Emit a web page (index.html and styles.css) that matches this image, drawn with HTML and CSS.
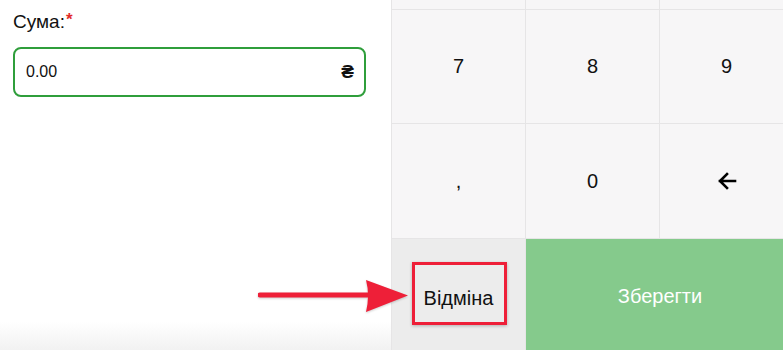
FILE: index.html
```html
<!DOCTYPE html>
<html>
  <head>
    <meta charset="utf-8">
    <title>Сума</title>
    <link rel="stylesheet" href="styles.css">
  </head>
  <body>
    <div class="screen">
      <div class="form">
        <label class="form-label">Сума:<span class="req">*</span></label>
        <div class="amount">
          <input class="amount-input" type="text" value="0.00">
          <span class="currency">₴</span>
        </div>
        <div class="form-shade"></div>
      </div>
      <div class="keypad">
        <div class="key key-top"></div>
        <div class="key key-top"></div>
        <div class="key key-top"></div>
        <div class="key">7</div>
        <div class="key">8</div>
        <div class="key">9</div>
        <div class="key">,</div>
        <div class="key">0</div>
        <div class="key">
          <svg width="20" height="18" viewBox="0 0 20 18">
            <path d="M18 9H3M10 2L3 9l7 7" fill="none" stroke="#000" stroke-width="2.6" stroke-linecap="square"/>
          </svg>
        </div>
        <div class="key key-cancel">Відміна</div>
        <div class="key key-save">Зберегти</div>
      </div>
    </div>
    <div class="mark-box"></div>
    <svg class="mark-arrow" width="160" height="40" viewBox="0 0 160 40">
      <line x1="2" y1="17" x2="112" y2="17" stroke="#ee1f38" stroke-width="5" stroke-linecap="round"/>
      <path d="M108 2 L150 17.5 L108 34 Q112 17 108 2 Z" fill="#ee1f38"/>
    </svg>
  </body>
</html>
```

FILE: styles.css
```css
body, html {
  margin: 0px;
  padding: 0px;
  height: 100%;
  background: #fff;
  font-family: "Liberation Sans", Arial, sans-serif;
  overflow: hidden;
}
.screen {
  display: flex;
  height: 350px;
  width: 783px;
  overflow: hidden;
}
.form {
  width: 391px;
  flex-shrink: 0;
  position: relative;
  padding: 11px 0 0 13px;
  box-sizing: border-box;
}
.form-label {
  display: block;
  font-size: 19px;
  color: #111;
  height: 36px;
}
.req {
  color: #e22b2b;
  font-weight: bold;
  font-size: 17px;
  vertical-align: top;
  position: relative;
  top: -1px;
  margin-left: 1px;
}
.amount {
  width: 353px;
  height: 50px;
  box-sizing: border-box;
  border: 2px solid #2f9e3b;
  border-radius: 8px;
  display: flex;
  align-items: center;
  padding: 0 10px 0 11px;
}
.amount-input {
  flex: 1;
  border: none;
  outline: none;
  padding: 0;
  font-family: "Liberation Sans", Arial, sans-serif;
  font-size: 16px;
  color: #111;
  background: transparent;
}
.currency {
  font-weight: bold;
  font-size: 19px;
  color: #111;
}
.form-shade {
  position: absolute;
  left: 0;
  right: 0;
  bottom: 0;
  height: 28px;
  background: linear-gradient(to bottom, rgba(240, 240, 240, 0), rgba(240, 240, 240, 0.9));
}
.keypad {
  display: grid;
  grid-template-columns: 134px 134px 134px;
  grid-template-rows: 10px 114px 115px 120px;
  border-left: 1px solid #e6e5e6;
  flex-shrink: 0;
}
.key {
  background: #f7f6f7;
  border-right: 1px solid #e6e5e6;
  border-bottom: 1px solid #e6e5e6;
  display: flex;
  align-items: center;
  justify-content: center;
  font-size: 20px;
  color: #111;
}
.key-cancel {
  background: #ececec;
  border-bottom: none;
  padding-bottom: 2px;
}
.key-save {
  grid-column: span 2;
  background: #85ca8c;
  color: #fff;
  border: none;
  font-size: 20px;
  padding-bottom: 6px;
}
.mark-box {
  position: absolute;
  left: 412px;
  top: 262px;
  width: 95px;
  height: 63px;
  box-sizing: border-box;
  border: 3px solid #ee1f38;
  box-shadow: 0 1px 3px rgba(0, 0, 0, 0.25);
}
.mark-arrow {
  position: absolute;
  left: 258px;
  top: 278px;
  filter: drop-shadow(0 1px 1px rgba(0, 0, 0, 0.2));
}
```
